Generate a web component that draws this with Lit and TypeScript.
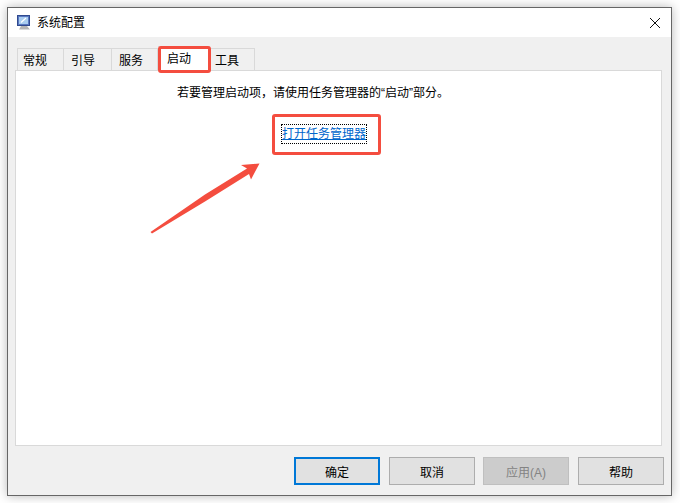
import { LitElement, html, css } from "lit";
import { customElement } from "lit/decorators.js";

@customElement("app-root")
export class AppRoot extends LitElement {
  static styles = css`
    :host { display: block; width: 680px; height: 503px; background: #fff; overflow: hidden; font-family: "Liberation Sans", "Noto Sans CJK SC", sans-serif; font-size: 12px; color: #000; }
    * { box-sizing: border-box; }
    .stage { position: relative; width: 680px; height: 503px; padding: 7px 8px 7px 7px; }
    .window { width: 665px; height: 489px; background: #f0f0f0; border: 1px solid #666; box-shadow: 0 0 10px rgba(0,0,0,.28); display: flex; flex-direction: column; }
    .title { height: 29px; background: #fff; display: flex; align-items: center; padding-left: 9px; gap: 6px; flex: none; }
    .title svg.app { width: 14px; height: 15px; flex: none; }
    .title span { flex: 1; line-height: 16px; color: #000; }
    .close { width: 12px; height: 12px; margin-right: 10px; flex: none; }
    .body { flex: 1; display: flex; flex-direction: column; padding: 11px 9px 9px 7px; }
    .tabs { display: flex; height: 22px; padding-left: 2px; flex: none; }
    .tab { height: 22px; background: #f0f0f0; border: 1px solid #d9d9d9; border-bottom: none; border-left: none; display: flex; align-items: center; padding: 0 0 0 7px; }
    .tab.first { border-left: 1px solid #d9d9d9; padding-left: 5px; }
    .tab.last { padding-left: 5px; }
    .tab.active { background: #fff; margin-top: -2px; height: 25px; position: relative; z-index: 1; align-items: flex-start; padding: 2px 0 0 9px; }
    .panel { height: 376px; width: 647px; background: #fff; border: 1px solid #d9d9d9; display: flex; flex-direction: column; align-items: flex-start; flex: none; }
    .hint { margin: 14px 0 0 161px; line-height: 16px; white-space: nowrap; }
    .link { margin: 24px 0 0 266px; padding-top: 1px; color: #0066cc; line-height: 16px; height: 18px; width: 84px; text-decoration: underline; outline: 1px dotted #000; white-space: nowrap; }
    .buttons { display: flex; gap: 9px; justify-content: flex-end; margin: 11px -2px 0 0; }
    button { width: 86px; height: 28px; font: inherit; background: #e1e1e1; border: 1px solid #adadad; color: #000; padding: 0; margin: 0; }
    button.primary { border: 2px solid #0078d7; }
    button:disabled { background: #ccc; border-color: #bfbfbf; color: #838383; margin-left: -1px; }
    .mark { position: absolute; z-index: 2; border: 3px solid #f44d3f; border-radius: 3px; pointer-events: none; }
    .m1 { left: 158px; top: 46px; width: 53px; height: 27px; }
    .m2 { left: 272px; top: 114px; width: 109px; height: 41px; }
    .arrow { position: absolute; z-index: 2; left: 0; top: 0; width: 680px; height: 503px; pointer-events: none; }
  `;

  render() {
    return html`
      <div class="stage">
        <div class="window">
          <div class="title">
            <svg class="app" viewBox="0 0 14 15">
              <rect x="0.5" y="0.5" width="12" height="10" fill="#5a78c0" stroke="#2f4a8f"/>
              <rect x="2" y="2" width="9" height="7" fill="#a9cdf0"/>
              <path d="M4 7.5 L9 3" stroke="#fff" stroke-width="1.2"/>
              <path d="M4 11 h6 l3 3.5 H2 Z" fill="#b5b5b5"/>
            </svg>
            <span>系统配置</span>
            <svg class="close" viewBox="0 0 12 12"><path d="M1 1 L11 11 M11 1 L1 11" stroke="#111" stroke-width="1" fill="none"/></svg>
          </div>
          <div class="body">
            <div class="tabs">
              <div class="tab first" style="width:47px">常规</div>
              <div class="tab" style="width:48px">引导</div>
              <div class="tab" style="width:46px">服务</div>
              <div class="tab active" style="width:52px">启动</div>
              <div class="tab last" style="width:45px">工具</div>
            </div>
            <div class="panel">
              <div class="hint">若要管理启动项，请使用任务管理器的“启动”部分。</div>
              <div class="link">打开任务管理器</div>
            </div>
            <div class="buttons">
              <button class="primary">确定</button>
              <button>取消</button>
              <button disabled>应用(A)</button>
              <button>帮助</button>
            </div>
          </div>
        </div>
        <div class="mark m1"></div>
        <div class="mark m2"></div>
        <svg class="arrow" viewBox="0 0 680 503">
          <polygon points="150.5,232 205,194.5 247,168.5 241,165 259.5,163.5 251,179.5 249,174 205,201.5 152,233.5" fill="#f44d3f"/>
        </svg>
      </div>
    `;
  }
}
